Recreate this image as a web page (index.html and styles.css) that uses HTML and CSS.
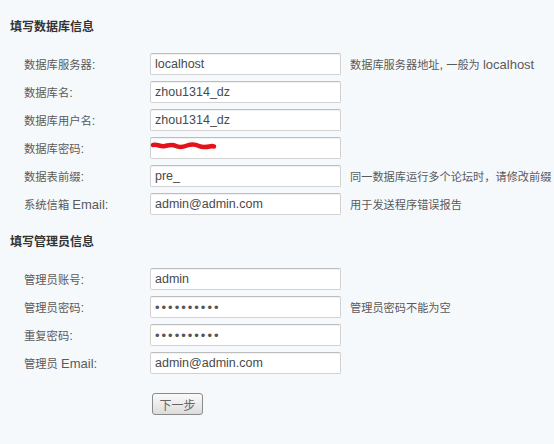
FILE: index.html
```html
<!DOCTYPE html>
<html>
<head>
    <title>填写数据库信息</title>
    <link rel="stylesheet" href="styles.css">
</head>
<body>
    <div class="page">
        <h2 class="section-title">填写数据库信息</h2>
        <div class="form-grid">
            <label>数据库服务器<span class="en">:</span></label>
            <input type="text" value="localhost">
            <span class="tip">数据库服务器地址<span class="en">,</span> 一般为 <span class="en">localhost</span></span>

            <label>数据库名<span class="en">:</span></label>
            <input type="text" value="zhou1314_dz">
            <span class="tip"></span>

            <label>数据库用户名<span class="en">:</span></label>
            <input type="text" value="zhou1314_dz">
            <span class="tip"></span>

            <label>数据库密码<span class="en">:</span></label>
            <div class="field-wrap">
                <input type="text" value="">
                <svg class="scribble" width="68" height="12" viewBox="0 0 68 12">
                    <path d="M3 5 C8 4 10 7 15 6 S22 4 26 6 S33 7 37 5.5 S45 4 49 6 S57 7 62 6 L64 6.5" fill="none" stroke="#e3121b" stroke-width="4.5" stroke-linecap="round"/>
                </svg>
            </div>
            <span class="tip"></span>

            <label>数据表前缀<span class="en">:</span></label>
            <input type="text" value="pre_">
            <span class="tip">同一数据库运行多个论坛时，请修改前缀</span>

            <label>系统信箱 <span class="en">Email:</span></label>
            <input type="text" value="admin@admin.com">
            <span class="tip">用于发送程序错误报告</span>
        </div>

        <h2 class="section-title">填写管理员信息</h2>
        <div class="form-grid">
            <label>管理员账号<span class="en">:</span></label>
            <input type="text" value="admin">
            <span class="tip"></span>

            <label>管理员密码<span class="en">:</span></label>
            <input type="password" class="pass" value="1234567890">
            <span class="tip">管理员密码不能为空</span>

            <label>重复密码<span class="en">:</span></label>
            <input type="password" class="pass" value="1234567890">
            <span class="tip"></span>

            <label>管理员 <span class="en">Email:</span></label>
            <input type="text" value="admin@admin.com">
            <span class="tip"></span>
        </div>

        <div class="btn-row">
            <button type="button">下一步</button>
        </div>
    </div>
</body>
</html>
```

FILE: styles.css
```css
body {
    margin: 0;
    padding: 0;
    background-color: #f6f9fc;
    font-family: "Liberation Sans", "Noto Sans CJK SC", sans-serif;
    color: #555;
}

.page {
    padding: 19px 0 0 10px;
}

.section-title {
    margin: 0;
    font-size: 12px;
    line-height: 16px;
    font-weight: bold;
    color: #333;
}

.form-grid {
    display: grid;
    grid-template-columns: 126px 191px auto;
    grid-auto-rows: 22px;
    row-gap: 6px;
    align-items: center;
    margin: 18px 0 19px 14px;
}

.form-grid label {
    font-size: 11.3px;
    color: #5a5a5a;
}

.en {
    font-size: 13px;
}

.form-grid input {
    box-sizing: border-box;
    width: 191px;
    height: 22px;
    margin: 0;
    padding: 0 4px;
    border: 1px solid #d2d2d2;
    border-top-color: #bdbdbd;
    border-radius: 2px;
    background: #fff;
    box-shadow: inset 0 1px 1px rgba(0, 0, 0, 0.06);
    font-family: "Liberation Sans", "Noto Sans CJK SC", sans-serif;
    font-size: 12.5px;
    color: #4a4a4a;
    outline: none;
}

.form-grid input.pass {
    font-size: 13px;
    letter-spacing: 2px;
    color: #555;
}

.field-wrap {
    position: relative;
    height: 22px;
}

.scribble {
    position: absolute;
    left: 0;
    top: 3px;
}

.tip {
    padding-left: 9px;
    font-size: 11.2px;
    color: #5a5a5a;
    white-space: nowrap;
}

.btn-row {
    padding-left: 142px;
    margin-top: 10px;
}

button {
    width: 51px;
    height: 22px;
    padding: 0;
    border: 1px solid #8a8a8a;
    border-radius: 3px;
    background: linear-gradient(#fafafa, #dcdcdc);
    font-family: "Noto Sans CJK SC", sans-serif;
    font-size: 12px;
    color: #666;
    cursor: pointer;
}
```
